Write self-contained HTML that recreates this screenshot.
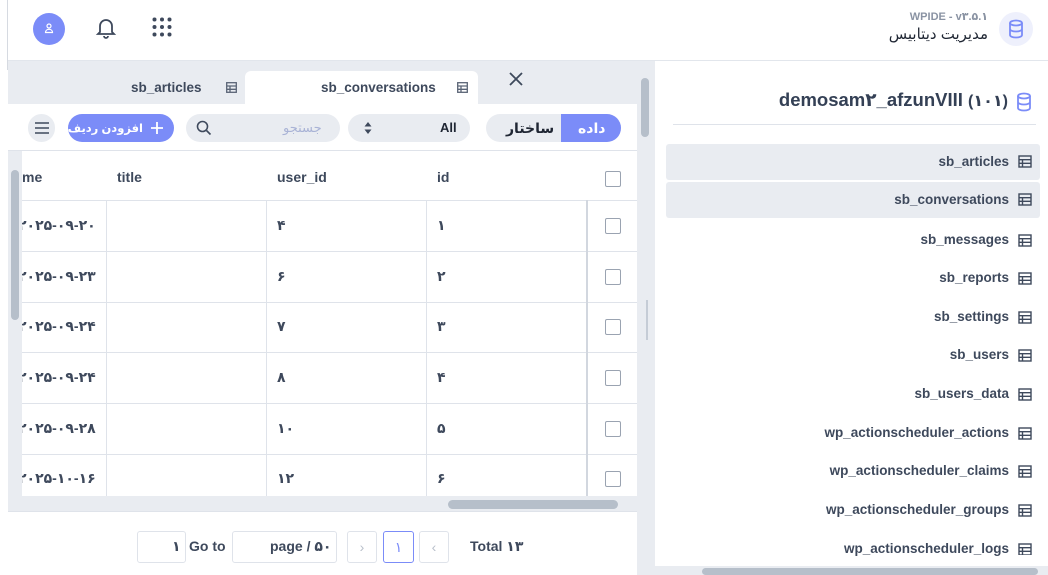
<!DOCTYPE html>
<html><head><meta charset="utf-8"><style>
*{box-sizing:border-box;margin:0;padding:0}
body{width:1048px;height:575px;overflow:hidden;background:#fff;font-family:"Liberation Sans","DejaVu Sans",sans-serif;color:#3e495c;position:relative;font-size:14px}
.a{position:absolute}
.b{font-weight:bold}
.tbl{position:absolute;left:22px;top:150px;width:615px;height:346px;overflow:hidden}
.hl{position:absolute;left:0;width:615px;height:1px;background:#dfe3ea}
.vl{position:absolute;top:50px;height:300px;width:1px;background:#dfe3ea}
.cb{position:absolute;width:16px;height:16px;border:1.5px solid #9aa3b1;border-radius:2px;background:#fff}
.cell{position:absolute;font-size:14px;font-weight:bold}
.li{position:absolute;left:666px;width:374px;height:36px;border-radius:3px;text-align:right;padding-right:31px;line-height:36px;font-weight:bold;font-size:13.5px}
</style></head><body>
<div class="a" style="left:0;top:0;width:8px;background:#fff;border-right:1px solid #d6dae1;height:70px"></div>
<div class="a" style="left:8px;top:60px;width:1040px;height:1px;background:#e2e6ec"></div>
<div class="a" style="left:33px;top:13px;width:32px;height:32px;border-radius:50%;background:#7b8cf8"></div>
<svg class="a" style="left:42px;top:21px" width="14" height="14" viewBox="0 0 14 14" fill="none" stroke="#fff" stroke-width="1.2"><circle cx="7" cy="5" r="2"/><path d="M3.5 11.5c0-2 1.6-3.2 3.5-3.2s3.5 1.2 3.5 3.2z"/></svg>
<svg class="a" style="left:95px;top:16px" width="22" height="24" viewBox="0 0 22 24" fill="none" stroke="#3e495c" stroke-width="1.8"><path d="M5 16V10a6 6 0 0 1 12 0v6l2 2H3z"/><path d="M9 20a2 2 0 0 0 4 0"/></svg>
<svg class="a" style="left:152px;top:17px" width="20" height="20" fill="#3e495c"><circle cx="2.5" cy="2.5" r="2"/><circle cx="10" cy="2.5" r="2"/><circle cx="17.5" cy="2.5" r="2"/><circle cx="2.5" cy="10" r="2"/><circle cx="10" cy="10" r="2"/><circle cx="17.5" cy="10" r="2"/><circle cx="2.5" cy="17.5" r="2"/><circle cx="10" cy="17.5" r="2"/><circle cx="17.5" cy="17.5" r="2"/></svg>
<div class="a b" style="right:60px;top:10px;font-size:11px;color:#8a93a3">WPIDE - v۳.۵.۱</div>
<div class="a" style="right:60px;top:25px;font-size:15px;color:#1f2633">مدیریت دیتابیس</div>
<div class="a" style="left:999px;top:12px;width:34px;height:34px;border-radius:50%;background:#eef0fc"></div>
<svg class="a" style="left:1007px;top:19px" width="18" height="20" viewBox="0 0 18 20" fill="none" stroke="#7b8cf8" stroke-width="1.8"><ellipse cx="9" cy="4" rx="6" ry="2.5"/><path d="M3 4v12c0 1.4 2.7 2.5 6 2.5s6-1.1 6-2.5V4M3 10c0 1.4 2.7 2.5 6 2.5s6-1.1 6-2.5"/></svg>

<div class="a" style="left:8px;top:61px;width:629px;height:43px;background:#e9ecf1"></div>
<div class="a" style="left:245px;top:71px;width:233px;height:34px;background:#fff;border-radius:6px 6px 0 0"></div>
<div class="a b" style="left:131px;top:80px;color:#3e495c;font-size:13.5px">sb_articles</div>
<div class="a b" style="left:321px;top:80px;color:#3e495c;font-size:13.5px">sb_conversations</div>
<svg class="a" style="left:226px;top:82px" width="11" height="11" fill="none" stroke="#5a6476" stroke-width="1.3"><rect x=".7" y=".7" width="9.6" height="9.6"/><path d="M.7 4h9.6M.7 7.3h9.6M4 4v6.3"/></svg>
<svg class="a" style="left:457px;top:82px" width="11" height="11" fill="none" stroke="#5a6476" stroke-width="1.3"><rect x=".7" y=".7" width="9.6" height="9.6"/><path d="M.7 4h9.6M.7 7.3h9.6M4 4v6.3"/></svg>
<svg class="a" style="left:508px;top:71px" width="16" height="16" stroke="#3e495c" stroke-width="1.8"><path d="M2 2l12 12M14 2L2 14"/></svg>
<div class="a" style="left:486px;top:114px;width:135px;height:28px;border-radius:14px;background:#e9ecf1;overflow:hidden"><div style="position:absolute;left:75px;top:0;width:60px;height:28px;background:#7b8cf8"></div></div>
<div class="a b" style="left:506px;top:120px;color:#1f2633">ساختار</div>
<div class="a b" style="left:578px;top:120px;color:#fff">داده</div>
<div class="a" style="left:348px;top:114px;width:122px;height:28px;border-radius:14px;background:#e9ecf1"></div>
<div class="a b" style="left:440px;top:120px;font-size:13px;color:#1f2633">All</div>
<svg class="a" style="left:364px;top:122px" width="8" height="12" fill="#3e495c"><path d="M4 0l3.5 4.5h-7zM4 12L.5 7.5h7z"/></svg>
<div class="a" style="left:186px;top:114px;width:154px;height:28px;border-radius:14px;background:#e9ecf1"></div>
<div class="a" style="left:283px;top:120px;font-size:13px;color:#a9b3d6">جستجو</div>
<svg class="a" style="left:196px;top:120px" width="16" height="16" fill="none" stroke="#3e495c" stroke-width="1.6"><circle cx="6.5" cy="6.5" r="5"/><path d="M10.5 10.5l4 4"/></svg>
<div class="a" style="left:68px;top:114px;width:106px;height:28px;border-radius:14px;background:#7b8cf8"></div>
<div class="a b" style="right:905px;top:121px;font-size:11.5px;color:#fff;white-space:nowrap">افزودن ردیف</div>
<svg class="a" style="left:150px;top:121px" width="14" height="14" stroke="#fff" stroke-width="1.8"><path d="M7 1v12M1 7h12"/></svg>
<div class="a" style="left:28px;top:114px;width:27px;height:28px;border-radius:14px;background:#e9ecf1"></div>
<svg class="a" style="left:34px;top:121px" width="16" height="14" stroke="#3e495c" stroke-width="1.6"><path d="M1 2h14M1 7h14M1 12h14"/></svg>
<div class="a" style="left:8px;top:150px;width:629px;height:1px;background:#dfe3ea"></div>
<div class="tbl">
<div class="hl" style="top:50px"></div><div class="hl" style="top:101px"></div><div class="hl" style="top:152px"></div><div class="hl" style="top:202px"></div><div class="hl" style="top:253px"></div><div class="hl" style="top:304px"></div>
<div class="vl" style="left:84px"></div><div class="vl" style="left:244px"></div><div class="vl" style="left:404px"></div><div class="vl" style="left:564px;width:2px;background:#d2d7df"></div>
<div class="cell" style="left:0;top:19px">me</div><div class="cell" style="left:95px;top:19px">title</div><div class="cell" style="left:255px;top:19px">user_id</div><div class="cell" style="left:415px;top:19px">id</div>
<div class="cb" style="left:583px;top:21px"></div>
<div class="cell" style="left:-4px;top:67px">۲۰۲۵-۰۹-۲۰</div><div class="cell" style="left:255px;top:67px">۴</div><div class="cell" style="left:415px;top:67px">۱</div><div class="cb" style="left:583px;top:68px"></div>
<div class="cell" style="left:-4px;top:118px">۲۰۲۵-۰۹-۲۳</div><div class="cell" style="left:255px;top:118px">۶</div><div class="cell" style="left:415px;top:118px">۲</div><div class="cb" style="left:583px;top:119px"></div>
<div class="cell" style="left:-4px;top:168px">۲۰۲۵-۰۹-۲۴</div><div class="cell" style="left:255px;top:168px">۷</div><div class="cell" style="left:415px;top:168px">۳</div><div class="cb" style="left:583px;top:169px"></div>
<div class="cell" style="left:-4px;top:219px">۲۰۲۵-۰۹-۲۴</div><div class="cell" style="left:255px;top:219px">۸</div><div class="cell" style="left:415px;top:219px">۴</div><div class="cb" style="left:583px;top:220px"></div>
<div class="cell" style="left:-4px;top:270px">۲۰۲۵-۰۹-۲۸</div><div class="cell" style="left:255px;top:270px">۱۰</div><div class="cell" style="left:415px;top:270px">۵</div><div class="cb" style="left:583px;top:271px"></div>
<div class="cell" style="left:-4px;top:320px">۲۰۲۵-۱۰-۱۶</div><div class="cell" style="left:255px;top:320px">۱۲</div><div class="cell" style="left:415px;top:320px">۶</div><div class="cb" style="left:583px;top:321px"></div>
</div>
<div class="a" style="left:8px;top:151px;width:14px;height:345px;background:#e9ecf1"></div>
<div class="a" style="left:11px;top:170px;width:8px;height:150px;border-radius:4px;background:#b6bfca"></div>
<div class="a" style="left:8px;top:496px;width:629px;height:16px;background:#e9ecf1;border-bottom:1px solid #dfe3ea"></div>
<div class="a" style="left:448px;top:500px;width:170px;height:9px;border-radius:5px;background:#b6bfca"></div>
<div class="a" style="left:137px;top:531px;width:49px;height:32px;border:1px solid #dfe3ea;border-radius:3px"></div>
<div class="a b" style="left:172px;top:538px">۱</div>
<div class="a b" style="left:189px;top:538px">Go to</div>
<div class="a" style="left:232px;top:531px;width:105px;height:32px;border:1px solid #dfe3ea;border-radius:3px"></div>
<div class="a b" style="left:270px;top:538px">page / ۵۰</div>
<div class="a" style="left:347px;top:531px;width:30px;height:32px;border:1px solid #dfe3ea;border-radius:3px;color:#b8bfca;text-align:center;line-height:30px">›</div>
<div class="a" style="left:383px;top:531px;width:31px;height:32px;border:1px solid #7b8cf8;border-radius:3px;color:#7b8cf8;text-align:center;line-height:30px">۱</div>
<div class="a" style="left:419px;top:531px;width:30px;height:32px;border:1px solid #dfe3ea;border-radius:3px;color:#b8bfca;text-align:center;line-height:30px">‹</div>
<div class="a b" style="left:470px;top:538px">Total ۱۳</div>
<div class="a" style="left:637px;top:61px;width:18px;height:514px;background:#e9ecf1"></div>
<div class="a" style="left:641px;top:78px;width:8px;height:59px;border-radius:4px;background:#b6bfca"></div>
<div class="a" style="left:646px;top:300px;width:2px;height:40px;background:#c5ccd6"></div>
<div class="a b" style="right:40px;top:89px;font-size:18.5px;color:#344055;white-space:nowrap">demosam۲_afzunVIII <span style="font-size:16px">(۱۰۱)</span></div>
<svg class="a" style="left:1015px;top:92px" width="18" height="20" viewBox="0 0 18 20" fill="none" stroke="#7b8cf8" stroke-width="1.8"><ellipse cx="9" cy="4" rx="6" ry="2.5"/><path d="M3 4v12c0 1.4 2.7 2.5 6 2.5s6-1.1 6-2.5V4M3 10c0 1.4 2.7 2.5 6 2.5s6-1.1 6-2.5"/></svg>
<div class="a" style="left:673px;top:124px;width:363px;height:1px;background:#dfe3ea"></div>
<div class="li" style="top:144px;background:#e9ecf1">sb_articles</div>
<div class="li" style="top:182px;background:#e9ecf1">sb_conversations</div>
<div class="li" style="top:222px">sb_messages</div>
<div class="li" style="top:260px">sb_reports</div>
<div class="li" style="top:299px">sb_settings</div>
<div class="li" style="top:337px">sb_users</div>
<div class="li" style="top:376px">sb_users_data</div>
<div class="li" style="top:415px">wp_actionscheduler_actions</div>
<div class="li" style="top:453px">wp_actionscheduler_claims</div>
<div class="li" style="top:492px">wp_actionscheduler_groups</div>
<div class="li" style="top:531px">wp_actionscheduler_logs</div>
<svg class="a" width="14" height="400" style="left:1018px;top:155px" fill="none" stroke="#3e495c" stroke-width="1.4">
<g id="t"><rect x="1" y="1" width="12" height="11"/><path d="M1 4.7h12M1 8.3h12M4.5 4.7V12"/></g>
<use href="#t" y="38"/><use href="#t" y="79"/><use href="#t" y="117"/><use href="#t" y="156"/><use href="#t" y="194"/><use href="#t" y="233"/><use href="#t" y="272"/><use href="#t" y="310"/><use href="#t" y="349"/><use href="#t" y="388"/>
</svg>
<div class="a" style="left:655px;top:566px;width:393px;height:9px;background:#e9ecf1"></div>
<div class="a" style="left:702px;top:568px;width:336px;height:7px;border-radius:4px;background:#b6bfca"></div>
</body></html>
